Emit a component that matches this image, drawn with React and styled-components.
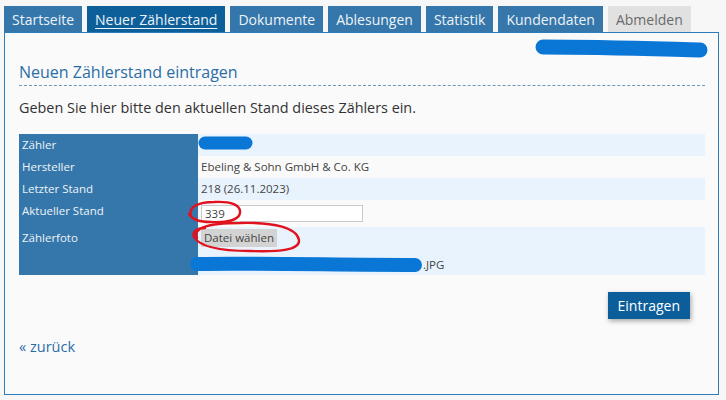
import React from "react";
import styled, { createGlobalStyle } from "styled-components";

const Global = createGlobalStyle`
  html, body { margin: 0; padding: 0; background: #f7f7f7; }
  body { font-family: "Open Sans", "Noto Sans", sans-serif; }
  * { box-sizing: border-box; }
`;

const Page = styled.div`
  position: relative;
  width: 726px;
  height: 400px;
  padding: 6px 7px 0 4px;
  overflow: hidden;
`;

const Tabs = styled.nav`
  display: flex;
  gap: 5px;
  height: 26px;
`;

const Tab = styled.a`
  display: flex;
  align-items: center;
  height: 26px;
  padding: 0 8px;
  font-size: 14px;
  color: ${(p) => (p.$muted ? "#6a6a6a" : "#eef3f8")};
  background: ${(p) => (p.$muted ? "#e1e1e1" : p.$active ? "#0d5f99" : "#3577aa")};
  text-decoration: ${(p) => (p.$active ? "underline" : "none")};
  text-underline-offset: 3px;
  text-decoration-thickness: 1px;
  white-space: nowrap;
`;

const Panel = styled.section`
  border: 1px solid #2e7dbb;
  background: #fafafa;
  height: 363px;
  padding: 28px 13px 0 14px;
`;

const Heading = styled.h2`
  margin: 0;
  font-size: 16px;
  font-weight: 400;
  color: #2a6ea6;
  line-height: 22px;
  padding-bottom: 2px;
  border-bottom: 1px dashed #6f97b8;
`;

const Intro = styled.p`
  margin: 11px 0 15px;
  font-size: 14.4px;
  line-height: 22px;
  color: #333;
`;

const Table = styled.table`
  width: 686px;
  border-collapse: collapse;
  font-size: 11.5px;
  line-height: 16px;
`;

const Row = styled.tr`
  background: ${(p) => (p.$alt ? "#fafafa" : "#e9f3fd")};
`;

const Label = styled.td`
  width: 179px;
  background: #3577aa;
  color: #eef3f8;
  vertical-align: top;
  padding: 3px 3px;
`;

const Value = styled.td`
  color: #444;
  vertical-align: top;
  padding: ${(p) => p.$pad || "3px 3px"};
`;

const TextInput = styled.input`
  display: block;
  width: 162px;
  height: 17px;
  margin: 2px 0;
  padding: 0 3px;
  border: 1px solid #c9c9c9;
  background: #fff;
  font: inherit;
  color: #444;
`;

const FileButton = styled.button`
  display: block;
  height: 18px;
  margin: 0 0 9px;
  padding: 0 3px;
  border: none;
  background: #d3d3d3;
  font: inherit;
  color: #444;
`;

const FileName = styled.div`
  line-height: 18px;
  padding-left: 222px;
`;

const Actions = styled.div`
  display: flex;
  justify-content: flex-end;
  padding-right: 15px;
  margin-top: 17px;
`;

const Submit = styled.button`
  height: 27px;
  padding: 0 10px;
  border: none;
  background: #0b5e9a;
  color: #fff;
  font-family: inherit;
  font-size: 14px;
  box-shadow: 1px 2px 5px rgba(0, 0, 0, 0.35);
`;

const BackLink = styled.a`
  display: block;
  margin-top: 18px;
  font-size: 14.5px;
  line-height: 20px;
  color: #2a6ea6;
  text-decoration: none;
`;

const Overlay = styled.svg`
  position: absolute;
  top: 0;
  left: 0;
  pointer-events: none;
`;

export default function App() {
  return (
    <Page>
      <Global />
      <Tabs>
        <Tab>Startseite</Tab>
        <Tab $active>Neuer Zählerstand</Tab>
        <Tab>Dokumente</Tab>
        <Tab>Ablesungen</Tab>
        <Tab>Statistik</Tab>
        <Tab>Kundendaten</Tab>
        <Tab $muted>Abmelden</Tab>
      </Tabs>
      <Panel>
        <Heading>Neuen Zählerstand eintragen</Heading>
        <Intro>Geben Sie hier bitte den aktuellen Stand dieses Zählers ein.</Intro>
        <Table>
          <tbody>
            <Row>
              <Label>Zähler</Label>
              <Value>&nbsp;</Value>
            </Row>
            <Row $alt>
              <Label>Hersteller</Label>
              <Value>Ebeling &amp; Sohn GmbH &amp; Co. KG</Value>
            </Row>
            <Row>
              <Label>Letzter Stand</Label>
              <Value>218 (26.11.2023)</Value>
            </Row>
            <Row $alt>
              <Label>Aktueller Stand</Label>
              <Value>
                <TextInput defaultValue="339" />
              </Value>
            </Row>
            <Row>
              <Label>Zählerfoto</Label>
              <Value $pad="2px 3px 1px">
                <FileButton>Datei wählen</FileButton>
                <FileName>.JPG</FileName>
              </Value>
            </Row>
          </tbody>
        </Table>
        <Actions>
          <Submit>Eintragen</Submit>
        </Actions>
        <BackLink>« zurück</BackLink>
      </Panel>
      <Overlay width="726" height="400" viewBox="0 0 726 400">
        <g stroke="#0a77d6" strokeLinecap="round" fill="none">
          <path d="M543 47 C600 47 660 49 700 50" strokeWidth="15" />
          <path d="M205 143 L246 143" strokeWidth="13" />
          <path d="M197 264 C260 263 340 265 415 265" strokeWidth="14" />
        </g>
        <g stroke="#e1121f" strokeWidth="2.4" fill="none" strokeLinecap="round">
          <path d="M191 216 C188 207 198 202 214 202 C231 201 241 205 240 213 C239 220 227 223 211 222 C199 222 193 220 189 214" />
          <path d="M197 238 C192 229 206 223 240 223 C275 222 297 228 299 240 C300 250 280 252 250 251 C220 251 200 247 194 237 C192 232 196 228 205 228" />
        </g>
      </Overlay>
    </Page>
  );
}
